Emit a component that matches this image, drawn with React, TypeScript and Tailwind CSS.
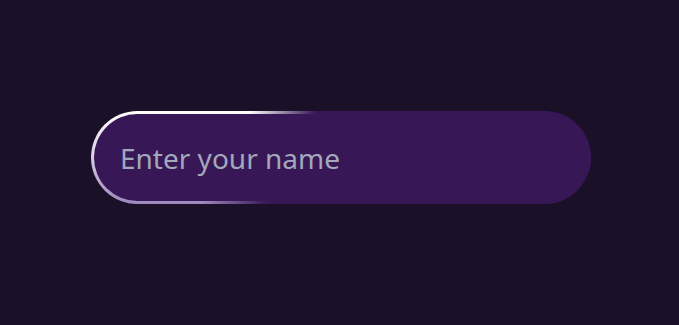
export default function App() {
  return (
    <div className="flex min-h-[325px] w-full items-center justify-center bg-[#1a1129] pb-[10px] pl-[3px] font-['Noto_Sans','Open_Sans',sans-serif]">
      <div className="w-[500px] rounded-full bg-[linear-gradient(118deg,transparent_29%,#371756_41%),linear-gradient(180deg,#ffffff_0%,#ddd3ea_45%,#9e88bd_100%)] py-[3px] pl-[3px]">
        <input
          type="text"
          placeholder="Enter your name"
          className="block h-[87px] w-full rounded-full bg-[#371756] pl-[26px] pr-6 text-[28px] text-gray-200 outline-none placeholder:text-[#a3a8ba]"
        />
      </div>
    </div>
  );
}
